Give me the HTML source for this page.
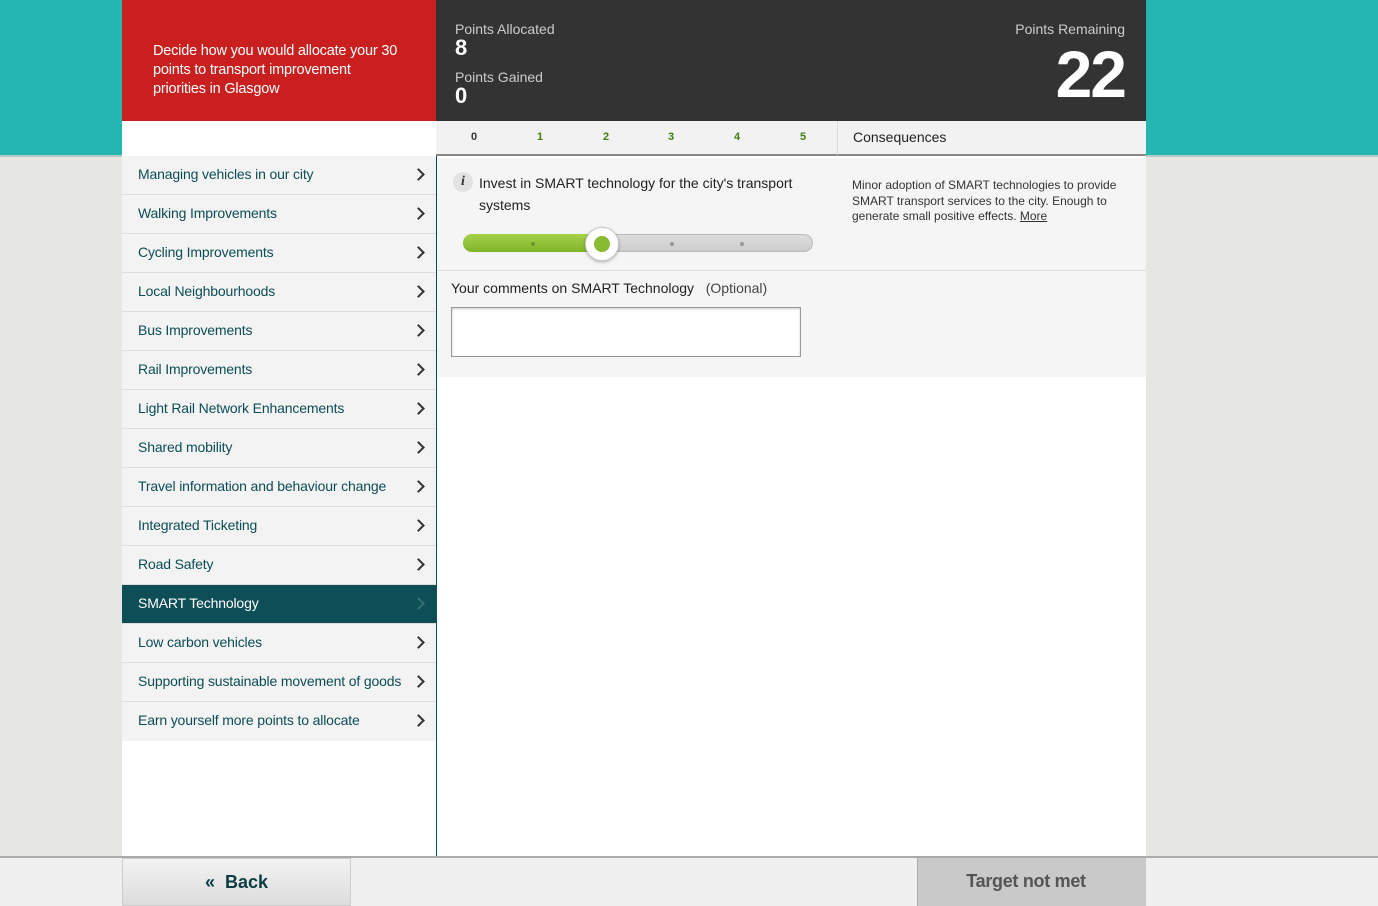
<!DOCTYPE html>
<html><head><style>
*{margin:0;padding:0;box-sizing:border-box}
body{width:1378px;height:906px;position:relative;overflow:hidden;font-family:"Liberation Sans",sans-serif;background:#e6e6e2}
.teal{position:absolute;left:0;top:0;width:1378px;height:157px;background:#25b6b1;border-bottom:2px solid #b7c9c6}
.wrap{position:absolute;left:122px;top:0;width:1024px;height:856px;background:#fff}
.red{position:absolute;left:0;top:0;width:314px;height:121px;background:#c9201f;color:#fff;font-size:14.5px;line-height:19px;padding:42px 30px 0 31px;letter-spacing:-0.2px}
.red:after{content:"";position:absolute;right:-10px;top:88px;border-left:10px solid #c9201f;border-top:10px solid transparent;border-bottom:10px solid transparent}
.dark{position:absolute;left:314px;top:0;width:710px;height:121px;background:#333}
.lab{position:absolute;color:#ccc;font-size:14px}
.num{position:absolute;color:#fff;font-weight:bold;font-size:22px}
.scale{position:absolute;left:314px;top:121px;width:401px;height:35px;background:#f2f2f2;border-bottom:2px solid #888}
.scale span{position:absolute;top:10px;font-size:11px;font-weight:bold;color:#3f7f0f}
.cons{position:absolute;left:715px;top:121px;width:309px;height:35px;background:#f2f2f2;border-left:1px solid #ddd;border-bottom:2px solid #888;font-size:14px;color:#222;padding:8px 0 0 15px}
.side{position:absolute;left:0;top:156px;width:314px}
.side div{height:39px;background:#f3f3f3;border-bottom:1px solid #ddd;color:#0b4d55;font-size:14px;padding:10px 0 0 16px;position:relative;letter-spacing:-0.15px}
.side div:last-child{border-bottom:none}
.side div:after{content:"";position:absolute;right:13px;top:14px;width:7px;height:7px;border-right:2px solid #333;border-top:2px solid #333;transform:rotate(45deg)}
.side div.act{background:#0d4e57;color:#fff}
.side div.act:after{border-color:#3a6e74}
.vline{position:absolute;left:314px;top:156px;width:1px;height:700px;background:#0d4e57}
.main{position:absolute;left:315px;top:158px;width:709px;height:219px;background:#f5f5f5}
</style></head><body>
<div class="teal"></div>
<div class="wrap">
<div class="red">Decide how you would allocate your 30 points to transport improvement priorities in Glasgow</div>
<div class="dark">
<div class="lab" style="left:19px;top:21px">Points Allocated</div>
<div class="num" style="left:19px;top:35px">8</div>
<div class="lab" style="left:19px;top:69px">Points Gained</div>
<div class="num" style="left:19px;top:83px">0</div>
<div class="lab" style="right:21px;top:21px">Points Remaining</div>
<div class="num" style="right:21px;top:38px;font-size:66px;line-height:72px;letter-spacing:-2px">22</div>
</div>
<div class="scale"><span style="left:35px;color:#333">0</span><span style="left:101px">1</span><span style="left:167px">2</span><span style="left:232px">3</span><span style="left:298px">4</span><span style="left:364px">5</span></div>
<div class="cons">Consequences</div>
<div class="side">
<div>Managing vehicles in our city</div><div>Walking Improvements</div><div>Cycling Improvements</div><div>Local Neighbourhoods</div><div>Bus Improvements</div><div>Rail Improvements</div><div>Light Rail Network Enhancements</div><div>Shared mobility</div><div>Travel information and behaviour change</div><div>Integrated Ticketing</div><div>Road Safety</div><div class="act">SMART Technology</div><div>Low carbon vehicles</div><div>Supporting sustainable movement of goods</div><div>Earn yourself more points to allocate</div>
</div>
<div class="vline"></div>
<div class="main">
<div style="position:absolute;left:16px;top:14px;width:20px;height:20px;border-radius:50%;background:#e2e2e2;font:italic bold 14px 'Liberation Serif',serif;color:#333;text-align:center;line-height:20px">i</div>
<div style="position:absolute;left:42px;top:14px;width:330px;font-size:14px;line-height:22px;color:#222">Invest in SMART technology for the city's transport systems</div>
<div style="position:absolute;left:26px;top:76px;width:350px;height:18px;border-radius:9px;background:linear-gradient(#ddd,#ccc);border:1px solid #bbb"></div>
<div style="position:absolute;left:26px;top:76px;width:150px;height:18px;border-radius:9px 0 0 9px;background:linear-gradient(#a6d14a,#7fb52a)"></div>
<div style="position:absolute;left:94px;top:84px;width:4px;height:4px;border-radius:50%;background:#6a9a2a"></div>
<div style="position:absolute;left:233px;top:84px;width:4px;height:4px;border-radius:50%;background:#999"></div>
<div style="position:absolute;left:303px;top:84px;width:4px;height:4px;border-radius:50%;background:#999"></div>
<div style="position:absolute;left:148px;top:69px;width:34px;height:34px;border-radius:50%;background:#fff;border:1px solid #ccc;box-shadow:0 1px 3px rgba(0,0,0,.3)"><div style="margin:8px;width:16px;height:16px;border-radius:50%;background:#86bb32"></div></div>
<div style="position:absolute;left:0;top:112px;width:709px;border-top:1px solid #ddd"></div>
<div style="position:absolute;left:14px;top:122px;font-size:14px;color:#222">Your comments on SMART Technology &nbsp; <span style="color:#444">(Optional)</span></div>
<div style="position:absolute;left:14px;top:149px;width:350px;height:50px;background:#fff;border:1px solid #999;box-shadow:inset 0 1px 2px rgba(0,0,0,.2)"></div>
</div>
<div style="position:absolute;left:730px;top:178px;width:280px;font-size:12px;line-height:15.5px;color:#333">Minor adoption of SMART technologies to provide SMART transport services to the city. Enough to generate small positive effects. <u>More</u></div>
</div>
<div style="position:absolute;left:0;top:856px;width:1378px;height:50px;background:#f0f0f0;border-top:2px solid #aaa"></div>
<div style="position:absolute;left:122px;top:858px;width:229px;height:48px;background:linear-gradient(#f3f3f3,#dcdcdc);border:1px solid #ccc;text-align:center;font-weight:bold;font-size:18px;color:#0b3c42;padding-top:13px">« &nbsp;Back</div>
<div style="position:absolute;left:917px;top:858px;width:229px;height:48px;background:#c9c9c9;border-left:1px solid #aaa;text-align:center;font-weight:bold;font-size:18px;color:#555;padding-top:13px;padding-right:12px;letter-spacing:-0.3px">Target not met</div>
</body></html>
